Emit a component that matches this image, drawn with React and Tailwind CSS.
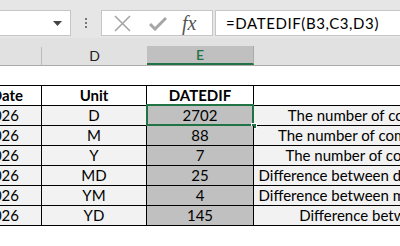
import React from 'react'

const rows = [
  { unit: 'D', val: '2702', desc: 'The number of complete days in the period' },
  { unit: 'M', val: '88', desc: 'The number of complete months in the period' },
  { unit: 'Y', val: '7', desc: 'The number of complete years in the period' },
  { unit: 'MD', val: '25', desc: 'Difference between days ignoring months and years' },
  { unit: 'YM', val: '4', desc: 'Difference between months ignoring days and years' },
  { unit: 'YD', val: '145', desc: 'Difference between days ignoring years' },
]

function FormulaBar() {
  return (
    <div className="h-[38px] bg-[#e6e6e6] flex items-start pt-[10px]">
      {/* Name box */}
      <div className="w-[71px] h-[26px] bg-white border border-l-0 border-[#c6c6c6] flex items-center justify-end pr-[8px]">
        <svg width="9" height="5" viewBox="0 0 9 5">
          <path d="M0 0 L9 0 L4.5 5 Z" fill="#444" />
        </svg>
      </div>

      {/* Splitter dots */}
      <div className="w-[30px] h-[26px] flex flex-col items-center justify-center gap-[2px]">
        <div className="w-[2px] h-[2px] bg-[#777]" />
        <div className="w-[2px] h-[2px] bg-[#777]" />
        <div className="w-[2px] h-[2px] bg-[#777]" />
      </div>

      {/* Cancel / enter / fx */}
      <div className="w-[112px] h-[26px] bg-white border border-[#c6c6c6] flex items-center">
        <svg className="ml-[12px]" width="17" height="17" viewBox="0 0 17 17">
          <path d="M1 1 L16 16 M16 1 L1 16" stroke="#a6a6a6" strokeWidth="1.6" />
        </svg>
        <svg className="ml-[18px]" width="18" height="15" viewBox="0 0 18 15">
          <path d="M1 8 L6 13 L17 2" stroke="#a6a6a6" strokeWidth="3" fill="none" />
        </svg>
        <span className="ml-[15px] text-[20px] italic text-[#555] font-['Liberation_Serif',serif] leading-none">
          fx
        </span>
      </div>

      {/* Formula input */}
      <div className="flex-1 ml-[2px] h-[26px] bg-white border border-r-0 border-[#c6c6c6] flex items-center pl-[10px] text-[15px] tracking-[0.6px] text-black">
        =DATEDIF(B3,C3,D3)
      </div>
    </div>
  )
}

function ColumnHeaders() {
  return (
    <div className="h-[28px] bg-[#e1e1e1] border-b border-[#ababab] flex items-end">
      <div className="w-[42px] h-[18px] border-r border-[#bdbdbd]" />
      <div className="w-[105px] h-[19px] flex items-center justify-center text-[14px] text-[#222]">D</div>
      <div className="w-[107px] h-[19px] bg-[#c0c0c0] border-b-2 border-[#217346] border-r border-r-[#ababab] flex items-center justify-center text-[14px] font-semibold text-[#217346]">
        E
      </div>
      <div className="flex-1" />
    </div>
  )
}

export default function App() {
  return (
    <div className="w-[400px] h-[246px] overflow-hidden bg-white font-['Lato',sans-serif] text-black">
      <FormulaBar />
      <ColumnHeaders />

      {/* Blank row */}
      <div className="h-[19px]" />

      {/* Table, column C runs past the left edge */}
      <div className="w-[800px] -ml-[40px] border-t border-black">
        <div className="flex h-[20px] border-b border-black bg-white font-bold text-[15px]">
          <div className="w-[82px] border-r border-black flex items-center justify-end pr-[18px]">Date</div>
          <div className="w-[105px] border-r border-black flex items-center justify-center">Unit</div>
          <div className="w-[107px] border-r border-black flex items-center justify-center">DATEDIF</div>
          <div className="w-[350px]" />
        </div>
        {rows.map((r, i) => (
          <div key={r.unit} className="flex h-[20px] border-b border-black bg-[#f2f2f2] text-[15px]">
            <div className="w-[82px] border-r border-black flex items-center justify-end pr-[22px] whitespace-nowrap">1/1/2026</div>
            <div className="w-[105px] border-r border-black flex items-center justify-center">{r.unit}</div>
            <div className="relative w-[107px] border-r border-black bg-[#c0c0c0] flex items-center justify-center">
              {r.val}
              {i === 0 && (
                <>
                  <div className="absolute -left-[1px] -top-[2px] -right-[1px] -bottom-[1px] border-2 border-[#217346]" />
                  <div className="absolute -right-[4px] -bottom-[4px] w-[6px] h-[6px] bg-[#217346] border border-white" />
                </>
              )}
            </div>
            <div className="w-[350px] flex items-center justify-center whitespace-nowrap">{r.desc}</div>
          </div>
        ))}
      </div>
    </div>
  )
}
